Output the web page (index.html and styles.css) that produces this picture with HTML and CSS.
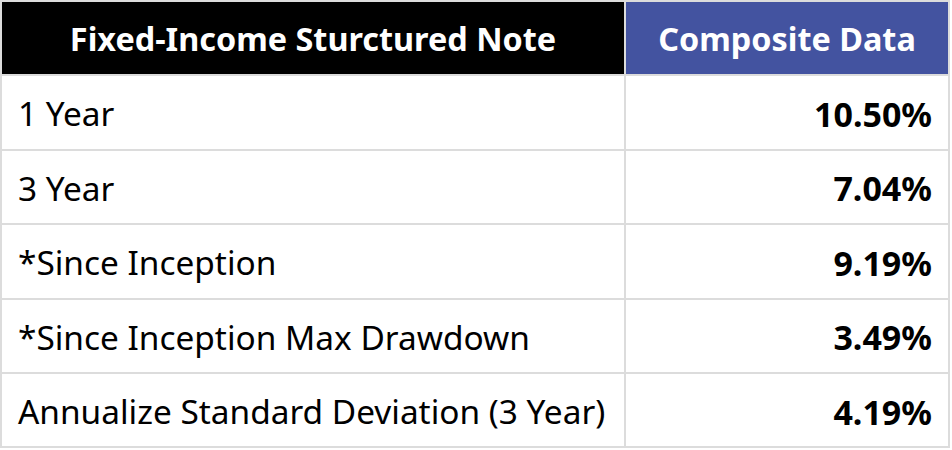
FILE: index.html
```html
<!DOCTYPE html>
<html>
<head>
<meta charset="utf-8">
<link rel="stylesheet" href="styles.css">
</head>
<body>
<table class="perf">
  <thead>
    <tr>
      <th class="h-name">Fixed-Income Sturctured Note</th>
      <th class="h-data">Composite Data</th>
    </tr>
  </thead>
  <tbody>
    <tr><td class="label">1 Year</td><td class="value">10.50%</td></tr>
    <tr><td class="label">3 Year</td><td class="value">7.04%</td></tr>
    <tr><td class="label">*Since Inception</td><td class="value">9.19%</td></tr>
    <tr><td class="label">*Since Inception Max Drawdown</td><td class="value">3.49%</td></tr>
    <tr><td class="label">Annualize Standard Deviation (3 Year)</td><td class="value">4.19%</td></tr>
  </tbody>
</table>
</body>
</html>
```

FILE: styles.css
```css
html, body {
  margin: 0;
  padding: 0;
  background: #ffffff;
}
body {
  font-family: "Noto Sans", "Open Sans", sans-serif;
  color: #000000;
}
.perf {
  border-collapse: collapse;
  width: 950px;
  table-layout: fixed;
}
.perf th, .perf td {
  border: 2px solid #dcdcdc;
  padding: 0;
  height: 74.4px;
  box-sizing: border-box;
  line-height: 1;
}
.perf th {
  color: #ffffff;
  font-weight: 700;
  font-size: 32.4px;
  text-align: center;
}
.h-name {
  width: 624px;
  background: #000000;
}
.h-data {
  background: #4353a0;
}
.label {
  font-size: 33.4px;
  font-weight: 400;
  padding-left: 16px !important;
  padding-top: 3px !important;
  text-align: left;
}
.value {
  font-size: 34px;
  font-weight: 700;
  text-align: right;
  padding-right: 16px !important;
  padding-top: 3px !important;
}
```
